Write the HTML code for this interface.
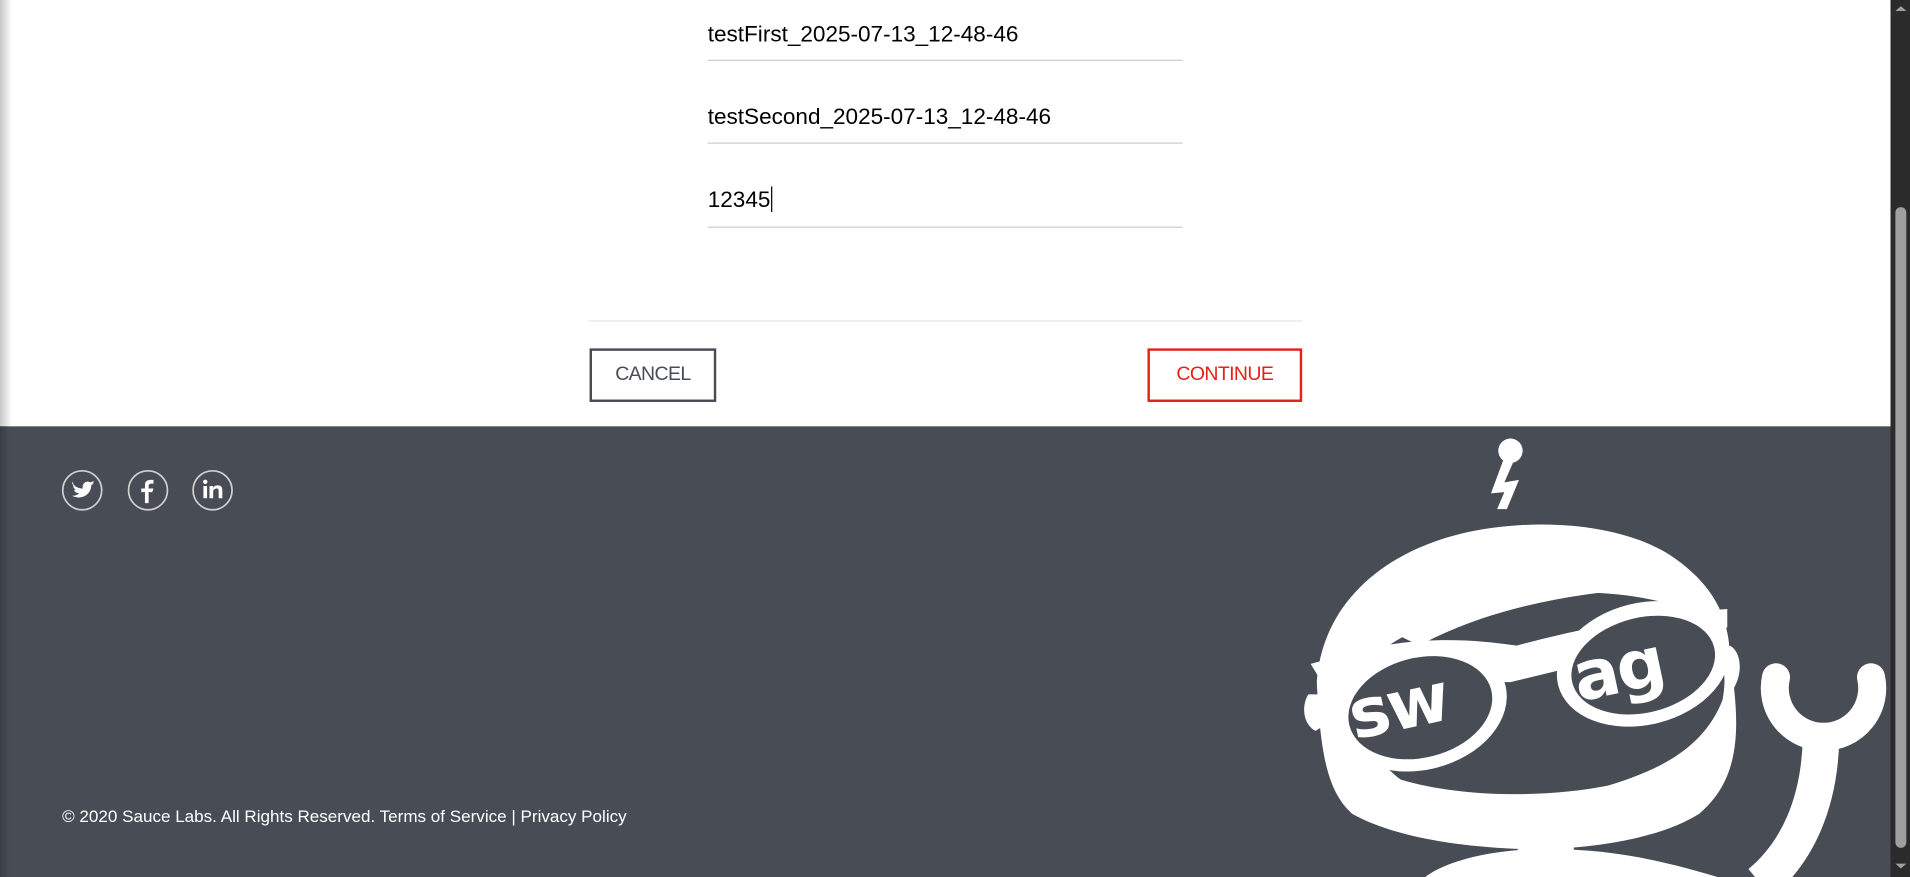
<!DOCTYPE html>
<html><head><meta charset="utf-8"><style>
html,body{margin:0;padding:0;width:1910px;height:877px;overflow:hidden;background:#fff}
#w{position:absolute;left:0;top:0;width:1568px;height:720px;transform:scale(1.21811);transform-origin:0 0;font-family:"Liberation Sans",Arial,sans-serif}
.abs{position:absolute}
.inp{position:absolute;left:581px;width:390px;border-bottom:1px solid #ccc;font-size:18.5px;color:#000;height:49px;line-height:20px}
.btn{position:absolute;top:286px;box-sizing:border-box;font-size:16px;text-align:center;letter-spacing:-0.5px}
</style></head><body><div id="w">
<div class="abs" style="left:0;top:0;width:10px;height:720px;background:linear-gradient(90deg,#c8c8c8,rgba(255,255,255,0))"></div>
<div class="inp" style="top:0"><span class="abs" style="top:18px;left:0">testFirst_2025-07-13_12-48-46</span></div>
<div class="inp" style="top:68px"><span class="abs" style="top:18px;left:0">testSecond_2025-07-13_12-48-46</span></div>
<div class="inp" style="top:137px"><span class="abs" style="top:17px;left:0">12345<span style="border-left:1px solid #000;margin-left:1px"></span></span></div>
<div class="abs" style="left:483px;top:263px;width:586px;height:1px;background:#e6e6e6"></div>
<div class="btn" style="left:484px;width:104px;height:44px;border:2px solid #474c55;color:#474c55;line-height:40px">CANCEL</div>
<div class="btn" style="left:942px;width:127px;height:44px;border:2px solid #e2231a;color:#e2231a;line-height:40px">CONTINUE</div>
<div class="abs" style="left:0;top:350px;width:1552px;height:370px;background:#474c55"></div>
<div class="abs" style="left:0;top:350px;width:8px;height:370px;background:linear-gradient(90deg,#3a3e45,rgba(71,76,85,0))"></div>
<svg class="abs" style="left:0;top:0" width="1568" height="720" viewBox="0 0 1568 720">
<g fill="none" stroke="#d0d0d0" stroke-width="1.4">
<circle cx="67.5" cy="402.5" r="16"/><circle cx="121.5" cy="402.5" r="16"/><circle cx="174.5" cy="402.5" r="16"/></g>
<path fill="#fff" d="M59,397c3,3 6,4 9,4c-1,-4 3,-7 6,-5c1,0 2,-1 3,-1c0,1 -1,2 -2,2c1,0 2,0 2,-1c0,1 -1,2 -2,2c0,8 -8,13 -16,9c3,0 5,-1 6,-2c-2,0 -4,-1 -4,-3c1,0 1,0 2,0c-2,0 -3,-2 -3,-4c0,0 1,1 2,1c-2,-1 -3,-3 -2,-5z"/>
<path fill="#fff" d="M119,413v-9h-3v-3h3v-3c0,-3 2,-4 5,-4h2v3h-2c-1,0 -2,1 -2,2v2h4l-1,3h-3v9z"/>
<g fill="#fff"><rect x="167" y="399" width="3" height="10"/><circle cx="168.5" cy="395.5" r="1.8"/><path d="M172,399h3v1.5c1,-1.5 2,-2 4,-2c2.5,0 3.5,1.5 3.5,4v6.5h-3v-6c0,-1.5 -.5,-2 -1.5,-2c-1.5,0 -3,1 -3,2.5v5.5h-3z"/></g>
<!-- robot -->
<g fill="#fff">
<circle cx="1240" cy="370" r="10"/>
<path d="M1234,378l8,2l-7,16l12,-2l-10,24h-8l6,-14l-11,1z"/>
<path d="M1081,560C1085,500 1130,455 1200,438C1260,424 1330,430 1370,455C1405,478 1420,505 1420,540C1430,600 1428,640 1395,668C1360,690 1300,698 1250,697C1190,695 1140,685 1110,668C1090,650 1084,620 1081,560z"/>
<path d="M1074,570c-6,10 -4,25 6,30l8,-5l-2,-25z M1420,530c10,5 12,25 0,40l-6,-5z"/>
<rect x="1246" y="685" width="46" height="14"/>
<path d="M1170,720C1190,705 1230,697 1270,697C1320,697 1360,705 1410,720z"/>
</g>
<path fill="#474c55" d="M1140,530C1200,490 1300,472 1385,500C1410,520 1420,545 1414,575C1400,610 1370,630 1320,645C1270,655 1200,655 1150,640C1120,620 1110,570 1140,530z"/>
<path fill="#fff" d="M1145,520C1200,490 1270,475 1350,483C1290,487 1220,500 1165,530z"/>
<!-- glasses -->
<g fill="#fff">
<path d="M1076,545L1120,533C1170,522 1210,525 1245,530C1290,518 1350,505 1418,500L1418,515L1405,520L1240,560L1085,560z"/>
<ellipse cx="1166" cy="580" rx="72" ry="52" transform="rotate(-14 1166 580)"/>
<ellipse cx="1349" cy="545" rx="72" ry="50" transform="rotate(-14 1349 545)"/>
</g>
<g fill="#474c55">
<ellipse cx="1166" cy="581" rx="60" ry="41" transform="rotate(-14 1166 581)"/>
<ellipse cx="1349" cy="546" rx="60" ry="39" transform="rotate(-14 1349 546)"/>
</g>
<g fill="#fff" font-family="'DejaVu Sans','Liberation Sans',sans-serif" font-weight="bold" font-size="56">
<text x="1112" y="607" transform="rotate(-12 1112 607)" letter-spacing="-2">sw</text>
<text x="1296" y="576" transform="rotate(-12 1296 576)" letter-spacing="-2">ag</text>
</g>
<g stroke="#fff" fill="none">
<path d="M1495,605C1494,660 1475,700 1445,725" stroke-width="30"/>
<path d="M1458,556A40,40 0 1 0 1536,556" stroke-width="23" stroke-linecap="round"/>
</g>
<rect x="1552" y="0" width="16" height="720" fill="#2b2b2b"/>
<rect x="1556" y="170" width="9" height="526" rx="4.5" fill="#9f9f9f"/>
<path d="M1556,9l4.5,-4l4.5,4z M1556,709l4.5,4l4.5,-4z" fill="#9f9f9f"/>
</svg>
<div class="abs" style="left:51px;top:662px;font-size:14px;color:#fff;white-space:nowrap">© 2020 Sauce Labs. All Rights Reserved. Terms of Service | Privacy Policy</div>
</div></body></html>
